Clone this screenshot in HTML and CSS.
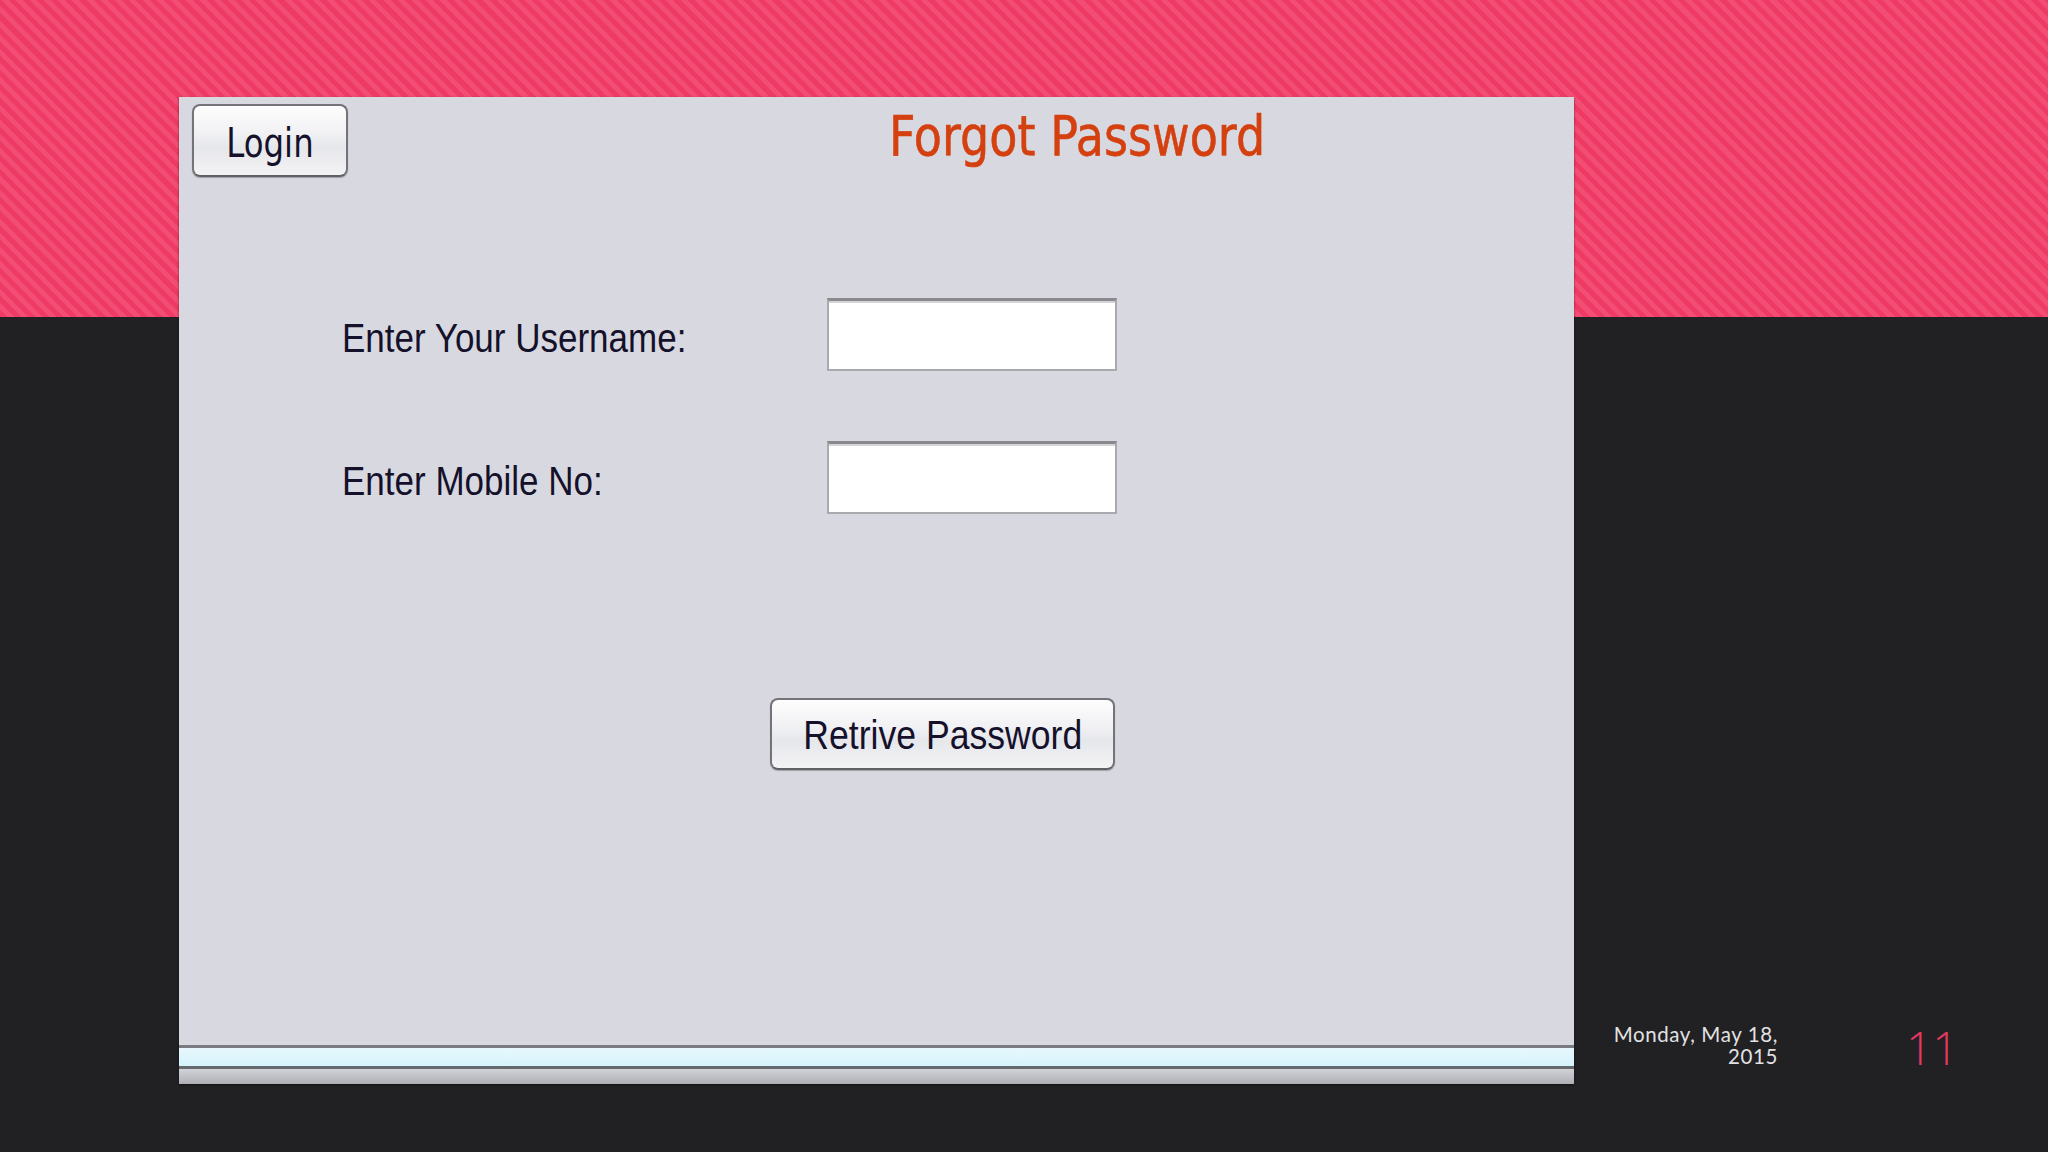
FILE: index.html
```html
<!DOCTYPE html>
<html>
<head>
<meta charset="utf-8">
<link rel="stylesheet" href="styles.css">
</head>
<body>
<div class="slide">
  <div class="panel">
    <div class="header">
      <div class="btn btn-login"><span class="sq-login">Login</span></div>
      <div class="title"><span class="sq-title">Forgot Password</span></div>
    </div>
    <div class="form">
      <div class="label"><span class="sq">Enter Your Username:</span></div>
      <div class="field"></div>
      <div class="label"><span class="sq">Enter Mobile No:</span></div>
      <div class="field"></div>
    </div>
    <div class="btn btn-retrive"><span class="sq-c">Retrive Password</span></div>
    <div class="spacer"></div>
    <div class="statusbar">
      <div class="sb-line"></div>
      <div class="sb-blue"></div>
      <div class="sb-line dark"></div>
      <div class="sb-gray"></div>
    </div>
  </div>
  <div class="aside">
    <div class="date">Monday, May 18,<br>2015</div>
    <div class="pagenum">11</div>
  </div>
</div>
</body>
</html>
```

FILE: styles.css
```css
html, body {
  margin: 0;
  padding: 0;
}
body {
  width: 2048px;
  height: 1152px;
  overflow: hidden;
  background: #212023;
}
.slide {
  width: 2048px;
  height: 1152px;
  box-sizing: border-box;
  padding: 97px 0 0 179px;
  display: flex;
  align-items: flex-start;
  background:
    repeating-linear-gradient(45deg, #ee3a64 0px, #ee3a64 5px, #f24d75 5px, #f24d75 10px) 0 0 / 100% 317px no-repeat,
    #212023;
}
.panel {
  width: 1395px;
  height: 987px;
  flex: none;
  box-sizing: border-box;
  padding-top: 7px;
  background: #d8d9e0;
  display: flex;
  flex-direction: column;
  box-shadow: 0 1px 2px rgba(0,0,0,0.5);
}
.header {
  display: flex;
  align-items: flex-start;
  padding-left: 13px;
  height: 73px;
}
.btn {
  box-sizing: border-box;
  border: 2px solid #737378;
  border-bottom-color: #5f5f64;
  border-radius: 8px;
  background: linear-gradient(to bottom, #fdfdfd 0%, #f1f1f4 40%, #e6e7eb 60%, #f3f3f5 100%);
  box-shadow: inset 0 1px 0 #ffffff, 0 1px 1px rgba(0,0,0,0.25);
  display: flex;
  align-items: center;
  justify-content: center;
  color: #15112b;
}
.btn-login {
  width: 156px;
  height: 73px;
  flex: none;
  padding-top: 4px;
}
.sq-login {
  display: inline-block;
  font-family: "DejaVu Sans", sans-serif;
  font-size: 40px;
  line-height: 40px;
  transform: scaleX(0.81);
  transform-origin: center;
}
.title {
  margin-left: 541px;
  height: 64px;
}
.sq-title {
  display: inline-block;
  font-family: "DejaVu Sans", sans-serif;
  font-size: 56px;
  line-height: 64px;
  color: #d4400f;
  white-space: nowrap;
  transform: scaleX(0.822);
  transform-origin: left center;
  -webkit-text-stroke: 0.6px #d4400f;
}
.form {
  display: grid;
  grid-template-columns: 485px 290px;
  grid-auto-rows: 73px;
  row-gap: 70px;
  margin: 121px 0 0 163px;
}
.label {
  align-self: center;
  padding-top: 7px;
  white-space: nowrap;
}
.sq {
  display: inline-block;
  font-family: "Liberation Sans", Arial, sans-serif;
  font-size: 40px;
  line-height: 40px;
  color: #15112b;
  transform: scaleX(0.875);
  transform-origin: left center;
}
.field {
  box-sizing: border-box;
  background: #ffffff;
  border: 2px solid #a9a9ae;
  border-top: 3px solid #88888d;
  box-shadow: inset 0 2px 0 #d4d4d8;
}
.btn-retrive {
  width: 345px;
  height: 72px;
  margin: 184px 0 0 591px;
  padding-top: 2px;
}
.sq-c {
  display: inline-block;
  font-family: "Liberation Sans", Arial, sans-serif;
  font-size: 40px;
  line-height: 40px;
  white-space: nowrap;
  transform: scaleX(0.89);
  transform-origin: center;
}
.spacer {
  flex: 1;
}
.statusbar {
  height: 39px;
  display: flex;
  flex-direction: column;
}
.sb-line {
  height: 3px;
  background: #787b80;
}
.sb-line.dark {
  background: #65686d;
}
.sb-blue {
  height: 18px;
  background: linear-gradient(to bottom, #e6f8fd, #d6f3fb);
}
.sb-gray {
  flex: 1;
  background: linear-gradient(to bottom, #d2d3d8, #aeafb4);
}
.aside {
  display: flex;
  align-items: flex-start;
  padding-top: 926px;
}
.date {
  width: 204px;
  text-align: right;
  font-family: "Lato", "Open Sans", sans-serif;
  font-size: 20.5px;
  line-height: 22px;
  color: #e2e2e2;
  letter-spacing: 0.6px;
}
.pagenum {
  margin-left: 128px;
  margin-top: 1px;
  font-family: "Open Sans", sans-serif;
  font-weight: 300;
  font-size: 46px;
  line-height: 46px;
  color: #e3385f;
}
```
